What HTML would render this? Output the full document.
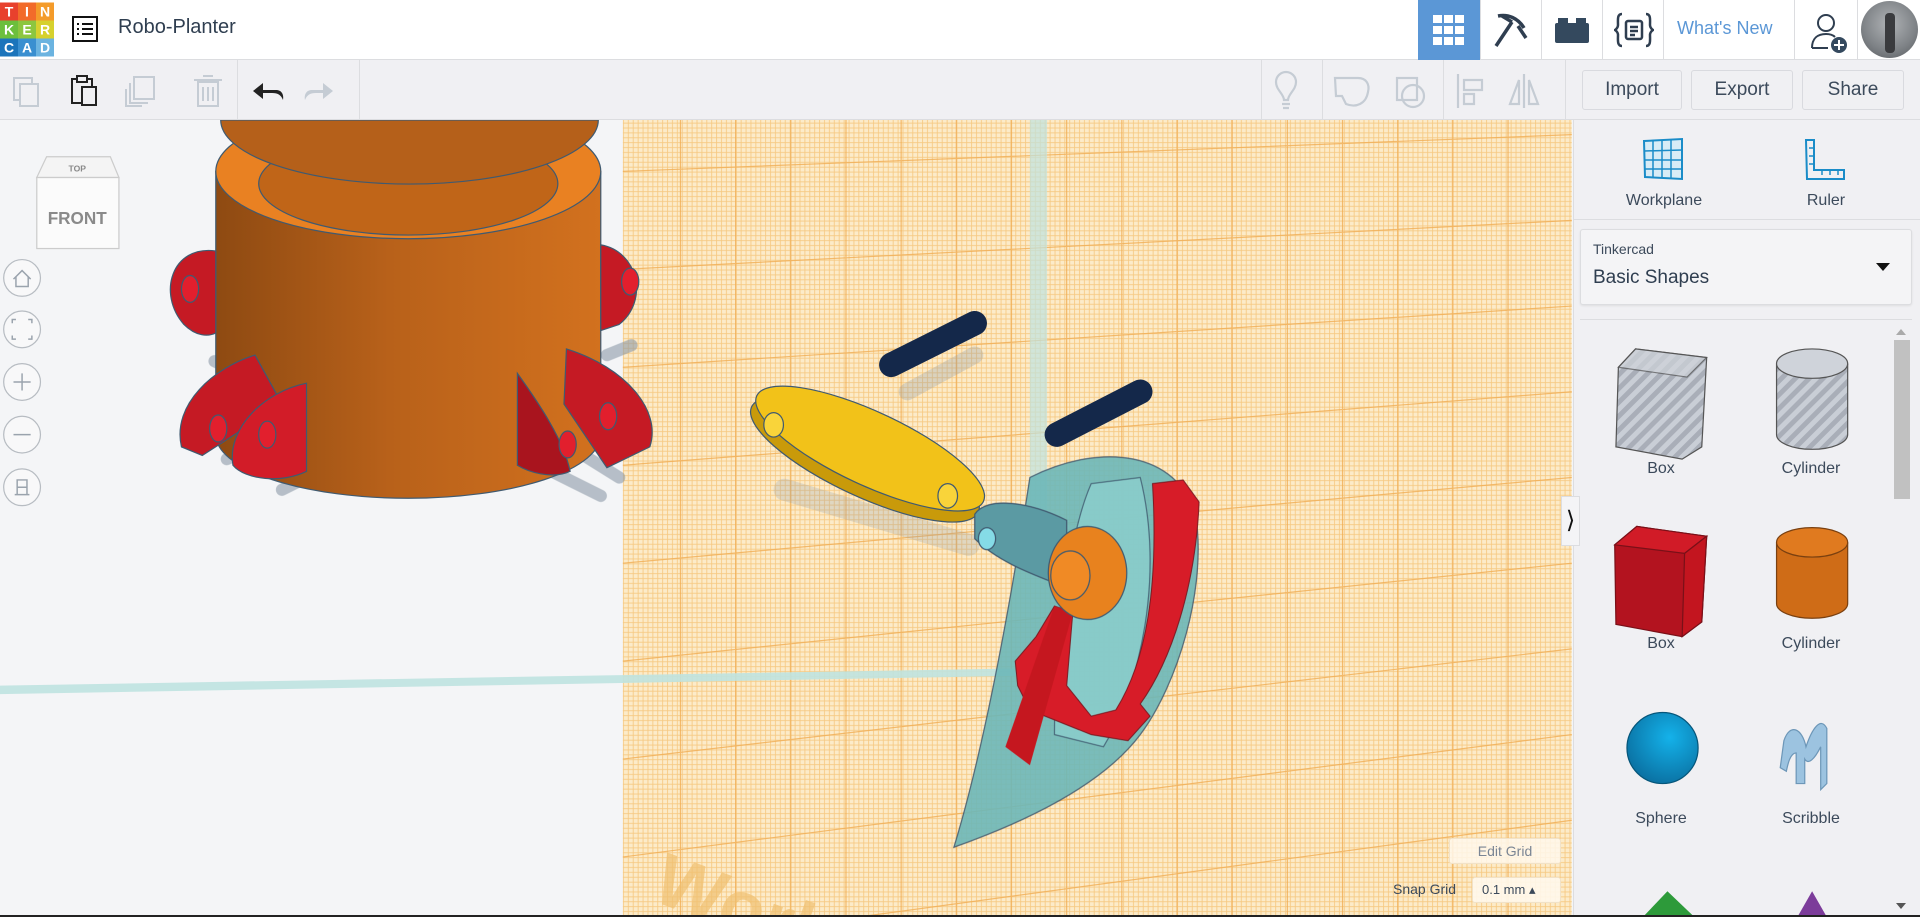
<!DOCTYPE html>
<html><head><meta charset="utf-8">
<style>
*{margin:0;padding:0;box-sizing:border-box}
html,body{width:1920px;height:917px;overflow:hidden}
body{background:#f4f5f7;font-family:"Liberation Sans",sans-serif;position:relative;color:#2f3e50}
.abs{position:absolute}
#hdr{left:0;top:0;width:1920px;height:60px;background:#fff;border-bottom:1px solid #dcdde0}
#tb{left:0;top:60px;width:1920px;height:60px;background:#f0f0f3;border-bottom:1px solid #dcdde0}
#panel{left:1573px;top:120px;width:347px;height:797px;background:#f0f0f3;border-left:1px solid #dcdde0}
.btn{position:absolute;top:70px;height:40px;border:1px solid #d9dadf;border-radius:3px;background:#f0f0f3;font-size:19px;color:#3c4a5b;text-align:center;line-height:38px}
.lbl{position:absolute;font-size:16px;color:#3c4a5b;text-align:center;width:150px}
.sep{position:absolute;width:1px;background:#dcdde0}
</style></head><body>

<svg class="abs" style="left:0;top:0" width="1920" height="917" viewBox="0 0 1566 749" preserveAspectRatio="none">
<defs>
<pattern id="fine" width="4" height="4" patternUnits="userSpaceOnUse">
<rect width="4" height="4" fill="#fcebc9"/>
<path d="M0 .5H4M.5 0V4" stroke="#f6c982" stroke-width=".7"/>
</pattern>
<linearGradient id="cyl" x1="0" x2="1">
<stop offset="0" stop-color="#8e4a12"/><stop offset=".45" stop-color="#b8611a"/><stop offset="1" stop-color="#d2711e"/>
</linearGradient>
</defs>
<polygon points="508,98 1282,98 1282,749 508,749" fill="url(#fine)"/>
<g stroke="#f1ae55" stroke-width="1" opacity=".8">
<path d="M555 98V749M600 98V749M645 98V749M690 98V749M735 98V749M780 98V749M825 98V749M870 98V749M915 98V749M960 98V749M1005 98V749M1050 98V749M1095 98V749M1140 98V749M1185 98V749M1230 98V749"/>
<path d="M508 140L1282 110M508 220L1282 180M508 300L1282 250M508 380L1282 320M508 460L1282 390M508 540L1282 460M508 620L1282 530M508 700L1282 600M700 749L1282 670"/>
</g>
<text x="530" y="735" font-size="60" font-weight="bold" fill="#f0c070" opacity=".7" transform="rotate(20 530 735)" font-family="Liberation Sans">Work</text>
<rect x="840" y="98" width="14" height="330" fill="#bfe3e0" opacity=".7"/>
<polygon points="0,560 830,546 830,552 0,567" fill="#bfe3e0" opacity=".9"/>
<g stroke="#8d9aa8" stroke-width="10" stroke-linecap="round" opacity=".6">
<path d="M175 295L215 315M185 375L240 350M230 400L280 375M465 365L505 390M440 380L490 405M495 290L515 282"/>
<path d="M740 320L795 290" stroke-width="14" opacity=".5"/>
<path d="M640 400L790 445" stroke-width="18" opacity=".4"/>
</g>
<path d="M176 140V355A157 52 0 0 0 490 355V140Z" fill="url(#cyl)" stroke="#405a70" stroke-width="1"/>
<ellipse cx="333" cy="140" rx="157" ry="55" fill="#e98122" stroke="#405a70"/>
<ellipse cx="333" cy="150" rx="122" ry="42" fill="#c06518" stroke="#405a70"/>
<path d="M180 98A153 52 0 0 0 488 98Z" fill="#b5601a" stroke="#405a70"/>
<g fill="#c51a24" stroke="#405a70" stroke-width="1">
<path d="M176 205C140 200 128 240 150 265C160 275 170 275 176 272Z"/>
<path d="M490 200C520 205 530 245 505 265L490 270Z"/>
<path d="M208 290C175 300 140 330 148 365L165 372L230 330Z"/>
<path d="M250 313C215 320 185 350 190 380C200 392 230 395 250 385Z" fill="#d21c28"/>
<path d="M422 305C440 330 460 360 465 385C450 392 430 385 422 380Z" fill="#a9141e"/>
<path d="M462 285C510 300 540 335 530 365L495 382L460 330Z"/>
</g>
<g fill="#e21f2d" stroke="#405a70">
<ellipse cx="155" cy="236" rx="7" ry="11"/><ellipse cx="514" cy="230" rx="7" ry="11"/>
<ellipse cx="178" cy="350" rx="7" ry="11"/><ellipse cx="218" cy="355" rx="7" ry="11"/>
<ellipse cx="463" cy="363" rx="7" ry="11"/><ellipse cx="496" cy="340" rx="7" ry="11"/>
</g>
<g>
<polygon points="38,128 90,128 97,145 30,145" fill="#f4f4f4" stroke="#ccc"/>
<rect x="30" y="145" width="67" height="58" fill="#fbfbfb" stroke="#ccc"/>
<text x="63" y="140" font-size="7" fill="#888" text-anchor="middle" font-weight="bold">TOP</text>
<text x="63" y="183" font-size="14" fill="#8a8a8a" text-anchor="middle" font-weight="bold">FRONT</text>
</g>
<g fill="#f8f8f9" stroke="#b7bcc2" stroke-width="1">
<circle cx="18" cy="227" r="15"/><circle cx="18" cy="269" r="15"/><circle cx="18" cy="312" r="15"/><circle cx="18" cy="355" r="15"/><circle cx="18" cy="398" r="15"/>
</g>
<g stroke="#9aa3ad" stroke-width="1.2" fill="none">
<path d="M11 228L18 221L25 228M13 226V234H23V226"/>
<path d="M10 264V261H13M23 261H26V264M26 274V277H23M13 277H10V274"/>
<path d="M11 312H25M18 305V319"/><path d="M11 355H25"/>
<path d="M12 404H24M14 404V392H22V404M14 398H22"/>
</g>
<g stroke-linecap="round">
<path d="M727 298L795 264" stroke="#14284a" stroke-width="20"/>
<path d="M862 355L930 320" stroke="#14284a" stroke-width="20"/>
</g>
<g transform="rotate(25 708 370)">
<ellipse cx="708" cy="376" rx="102" ry="30" fill="#c99a0a" stroke="#405a70"/>
<ellipse cx="708" cy="366" rx="102" ry="30" fill="#f2c219" stroke="#405a70"/>
</g>
<ellipse cx="631" cy="347" rx="8" ry="10" fill="#f9d43a" stroke="#405a70"/>
<ellipse cx="773" cy="405" rx="8" ry="10" fill="#f9d43a" stroke="#405a70"/>
<path d="M840 390C900 360 960 370 975 420C985 480 960 560 930 600C900 640 840 670 778 692C800 620 820 520 840 390Z" fill="#6cb7b8" stroke="#405a70" opacity=".9"/>
<path d="M890 395C870 440 860 540 860 600L900 610C930 560 950 470 930 390Z" fill="#8ccfcd" stroke="#405a70" opacity=".8"/>
<path d="M795 420C805 405 840 410 870 425V480C845 470 815 460 795 440Z" fill="#5b9aa3" stroke="#405a70"/>
<ellipse cx="805" cy="440" rx="7" ry="9" fill="#85dbe6" stroke="#405a70"/>
<path d="M940 395L965 392L978 410C975 480 955 540 930 575L938 585L920 605L890 600L840 580L830 560L828 540L845 520L860 495L875 500L870 560L890 585L910 580C935 540 945 480 940 395Z" fill="#d71c28" stroke="#7a1a22" stroke-width=".8"/>
<path d="M860 495L820 610L840 625L875 500Z" fill="#c5171f"/>
<ellipse cx="887" cy="468" rx="32" ry="38" fill="#e8821e" stroke="#405a70"/>
<ellipse cx="873" cy="470" rx="16" ry="20" fill="#f08a25" stroke="#405a70"/>
</svg>

<div id="hdr" class="abs"></div>
<svg class="abs" style="left:0;top:2px" width="54" height="55" viewBox="0 0 54 54">
<rect x="0" y="0" width="18" height="18" fill="#e8412d"/><rect x="18" y="0" width="18" height="18" fill="#f26b2a"/><rect x="36" y="0" width="18" height="18" fill="#f49b2a"/>
<rect x="0" y="18" width="18" height="18" fill="#6cbf3c"/><rect x="18" y="18" width="18" height="18" fill="#8cc63f"/><rect x="36" y="18" width="18" height="18" fill="#d6d12e"/>
<rect x="0" y="36" width="18" height="18" fill="#1b74bb"/><rect x="18" y="36" width="18" height="18" fill="#3a8fd0"/><rect x="36" y="36" width="18" height="18" fill="#6bb3e0"/>
<g fill="#fff" font-family="Liberation Sans" font-weight="bold" font-size="14" text-anchor="middle">
<text x="9" y="14">T</text><text x="27" y="14">I</text><text x="45" y="14">N</text>
<text x="9" y="32">K</text><text x="27" y="32">E</text><text x="45" y="32">R</text>
<text x="9" y="50">C</text><text x="27" y="50">A</text><text x="45" y="50">D</text></g>
</svg>
<svg class="abs" style="left:71px;top:15px" width="28" height="28" viewBox="0 0 28 28" fill="none" stroke="#111" stroke-width="2">
<rect x="2" y="2" width="24" height="24"/><path d="M6 9h2M11 9h11M6 14h2M11 14h11M6 19h2M11 19h11"/></svg>
<div class="abs" style="left:118px;top:16px;font-size:20px;color:#2f3e50">Robo-Planter</div>

<div class="abs" style="left:1418px;top:0;width:62px;height:60px;background:#5b97d6"></div>
<svg class="abs" style="left:1432px;top:14px" width="34" height="32" viewBox="0 0 34 32" fill="#fff">
<rect x="1" y="1" width="9" height="8"/><rect x="12" y="1" width="9" height="8"/><rect x="23" y="1" width="9" height="8"/>
<rect x="1" y="12" width="9" height="8"/><rect x="12" y="12" width="9" height="8"/><rect x="23" y="12" width="9" height="8"/>
<rect x="1" y="23" width="9" height="8"/><rect x="12" y="23" width="9" height="8"/><rect x="23" y="23" width="9" height="8"/></svg>
<svg class="abs" style="left:1492px;top:12px" width="38" height="38" viewBox="0 0 38 38" fill="none" stroke="#2f3e50" stroke-width="3.5">
<path d="M6 4C16 2 26 6 32 16M20 10L4 34"/><path d="M20 10L10 4M26 14L34 26"/></svg>
<svg class="abs" style="left:1555px;top:17px" width="34" height="26" viewBox="0 0 34 26" fill="#34495e">
<rect x="0" y="6" width="34" height="20" rx="2"/><rect x="3" y="1" width="10" height="7"/><rect x="21" y="1" width="10" height="7"/></svg>
<svg class="abs" style="left:1614px;top:12px" width="40" height="36" viewBox="0 0 40 36" fill="none" stroke="#2f3e50" stroke-width="2.5">
<path d="M8 2C3 2 4 8 4 13C4 16 1 18 1 18C1 18 4 20 4 23C4 28 3 34 8 34M32 2C37 2 36 8 36 13C36 16 39 18 39 18C39 18 36 20 36 23C36 28 37 34 32 34"/>
<rect x="12" y="9" width="16" height="18" rx="2"/><path d="M16 15h8M16 19h8M16 23h5"/></svg>
<div class="sep" style="left:1480px;top:0;height:60px"></div><div class="sep" style="left:1541px;top:0;height:60px"></div><div class="sep" style="left:1602px;top:0;height:60px"></div><div class="sep" style="left:1663px;top:0;height:60px"></div>
<div class="abs" style="left:1677px;top:18px;font-size:18px;color:#5b97d6">What's New</div>
<div class="sep" style="left:1794px;top:0;height:60px"></div><div class="sep" style="left:1857px;top:0;height:60px"></div>
<svg class="abs" style="left:1810px;top:12px" width="40" height="42" viewBox="0 0 40 42" fill="none" stroke="#2f3e50" stroke-width="2">
<circle cx="16" cy="11" r="8"/><path d="M2 36C2 26 8 22 16 22C20 22 23 23 25 25M2 36H18"/>
<circle cx="29" cy="33" r="8" fill="#34495e" stroke="none"/><path d="M29 28V38M24 33H34" stroke="#fff"/></svg>
<div class="abs" style="left:1861px;top:1px;width:57px;height:57px;border-radius:50%;background:radial-gradient(circle at 50% 40%,#b0b3b6,#7e8286 60%,#55585c);overflow:hidden">
<div style="position:absolute;left:24px;top:12px;width:10px;height:40px;background:#3a3b3e;border-radius:4px"></div></div>

<div id="tb" class="abs"></div>
<svg class="abs" style="left:10px;top:73px" width="340" height="34" viewBox="0 0 340 34" fill="none" stroke-width="2">
<g stroke="#c5ccd4"><rect x="4" y="5" width="18" height="22"/><rect x="10" y="11" width="18" height="22" fill="#f0f0f3"/></g>
<g stroke="#222"><rect x="62" y="6" width="20" height="24"/><rect x="67" y="3" width="10" height="6" fill="#f0f0f3"/><rect x="72" y="14" width="14" height="18" fill="#f0f0f3"/></g>
<g stroke="#c5ccd4"><rect x="124" y="4" width="20" height="22"/><path d="M120 10V30H138"/><path d="M116 16V33H132"/></g>
<g stroke="#c5ccd4"><rect x="188" y="9" width="20" height="24"/><path d="M184 7H212M193 3H203M193 14V28M198 14V28M203 14V28"/></g>
<path d="M248 17H266C272 17 274 22 273 27C271 22 268 20 262 20H248Z" fill="#222" stroke="none"/><path d="M243 18L253 10V26Z" fill="#222"/>
<path d="M318 17H302C296 17 294 22 295 27C297 22 300 20 306 20H318Z" fill="#c5ccd4" stroke="none"/><path d="M323 18L313 10V26Z" fill="#c5ccd4"/>
</svg>
<div class="sep" style="left:237px;top:60px;height:60px"></div><div class="sep" style="left:359px;top:60px;height:60px"></div>
<div class="sep" style="left:1261px;top:60px;height:60px"></div><div class="sep" style="left:1322px;top:60px;height:60px"></div><div class="sep" style="left:1443px;top:60px;height:60px"></div><div class="sep" style="left:1565px;top:60px;height:60px"></div>
<svg class="abs" style="left:1270px;top:70px" width="290" height="42" viewBox="0 0 290 42" fill="none" stroke="#c5ccd4" stroke-width="2.2">
<path d="M14 30C14 24 6 20 6 12A10 10 0 0 1 26 12C26 20 18 24 18 30ZM12 34H20M13 38H19"/>
<path d="M65 8H88C96 8 100 14 98 22C96 34 86 38 76 34L72 26H66Z"/>
<rect x="127" y="8" width="20" height="22"/><circle cx="143" cy="26" r="11"/>
<path d="M188 4V38M194 10H212V20H194ZM194 24H204V34H194Z"/>
<path d="M254 4V38M249 10L240 34H249ZM259 10L268 34H259Z"/>
</svg>
<div class="btn" style="left:1582px;width:100px">Import</div>
<div class="btn" style="left:1691px;width:102px">Export</div>
<div class="btn" style="left:1802px;width:102px">Share</div>

<div id="panel" class="abs"></div>
<svg class="abs" style="left:0;top:0" width="1920" height="917" viewBox="0 0 1566 749" preserveAspectRatio="none">
<defs>
<pattern id="str" width="8" height="8" patternUnits="userSpaceOnUse" patternTransform="rotate(45)">
<rect width="8" height="8" fill="#a9aeb8"/><rect width="4" height="8" fill="#c9ced6"/></pattern>
<radialGradient id="sph" cx=".6" cy=".35" r=".7"><stop offset="0" stop-color="#14b2ea"/><stop offset="1" stop-color="#0a6fa0"/></radialGradient>
</defs>
<g stroke="#555" stroke-width="1">
<polygon points="1320,300 1334,285 1392,292 1388,365 1372,375 1318,365" fill="url(#str)"/>
<polygon points="1320,300 1334,285 1392,292 1376,308" fill="#cfd3da" opacity=".7"/>
<path d="M1449 297V355A29 12 0 0 0 1507 355V297" fill="url(#str)"/>
<ellipse cx="1478" cy="297" rx="29" ry="12" fill="#cfd3da"/>
<polygon points="1317,445 1335,430 1392,438 1388,508 1372,520 1318,510" fill="#b3131f" stroke="#7a1018"/>
<polygon points="1317,445 1335,430 1392,438 1374,452" fill="#d11b27" stroke="#7a1018"/>
<polygon points="1374,452 1392,438 1388,508 1372,520" fill="#c3151f" stroke="#7a1018"/>
<path d="M1449 443V493A29 12 0 0 0 1507 493V443" fill="#cf6c17" stroke="#7a4010"/>
<ellipse cx="1478" cy="443" rx="29" ry="12" fill="#e07a1f" stroke="#7a4010"/>
</g>
<circle cx="1356" cy="611" r="29" fill="url(#sph)" stroke="#06567a"/>
<path d="M1455 605C1460 590 1470 595 1473 610C1478 595 1485 585 1490 595V640L1485 645V610C1480 620 1475 625 1472 620V640L1465 640V615C1460 615 1458 625 1457 630L1452 627Z" fill="#9cc3e0" stroke="#6d97b8"/>
<polygon points="1340,749 1360,728 1382,749" fill="#2d9a3a"/>
<polygon points="1466,749 1478,728 1490,749" fill="#7c3c9a"/>
</svg>
<svg class="abs" style="left:1642px;top:137px" width="42" height="45" viewBox="0 0 42 45" fill="#d8ecf6" stroke="#1a8cc8" stroke-width="2">
<path d="M2 4L40 2V42L3 40Z"/><path d="M2 14L40 13M2 23L40 23M2 32L40 32M11 4V40M20 3V41M29 3V41" stroke-width="1.5"/></svg>
<div class="lbl" style="left:1589px;top:192px">Workplane</div>
<svg class="abs" style="left:1803px;top:138px" width="44" height="44" viewBox="0 0 44 44" fill="none" stroke="#1a8cc8" stroke-width="2">
<path d="M3 2H11V32H41V41H4Z"/><path d="M11 10H6M11 18H6M11 26H6M19 32V37M27 32V37M35 32V37" stroke-width="1.5"/></svg>
<div class="lbl" style="left:1751px;top:192px">Ruler</div>
<div class="abs" style="left:1573px;top:219px;width:347px;height:1px;background:#dcdde0"></div>
<div class="abs" style="left:1580px;top:229px;width:332px;height:76px;background:#f4f4f6;border:1px solid #dcdde0;border-radius:3px;box-shadow:0 1px 2px rgba(0,0,0,.08)"></div>
<div class="abs" style="left:1593px;top:241px;font-size:14px;color:#3c4a5b">Tinkercad</div>
<div class="abs" style="left:1593px;top:267px;font-size:19px;color:#2f3e50">Basic Shapes</div>
<div class="abs" style="left:1876px;top:263px;width:0;height:0;border-left:7px solid transparent;border-right:7px solid transparent;border-top:8px solid #111"></div>
<div class="abs" style="left:1580px;top:319px;width:332px;height:1px;background:#dcdde0"></div>
<div class="abs" style="left:1896px;top:329px;width:0;height:0;border-left:5px solid transparent;border-right:5px solid transparent;border-bottom:6px solid #aaa"></div>
<div class="abs" style="left:1894px;top:340px;width:16px;height:159px;background:#c1c1c1"></div>
<div class="abs" style="left:1896px;top:903px;width:0;height:0;border-left:5px solid transparent;border-right:5px solid transparent;border-top:6px solid #555"></div>
<div class="lbl" style="left:1586px;top:460px">Box</div>
<div class="lbl" style="left:1736px;top:460px">Cylinder</div>
<div class="lbl" style="left:1586px;top:635px">Box</div>
<div class="lbl" style="left:1736px;top:635px">Cylinder</div>
<div class="lbl" style="left:1586px;top:810px">Sphere</div>
<div class="lbl" style="left:1736px;top:810px">Scribble</div>
<div class="abs" style="left:1561px;top:496px;width:19px;height:50px;background:#f4f4f6;border:1px solid #dcdde0;font-size:24px;text-align:center;line-height:48px;color:#111">&#10217;</div>

<div class="abs" style="left:1449px;top:838px;width:112px;height:26px;background:rgba(255,248,236,.85);border:1px solid #f1e2c8;border-radius:3px;font-size:14px;color:#7a8594;text-align:center;line-height:24px">Edit Grid</div>
<div class="abs" style="left:1393px;top:881px;font-size:14px;color:#3c4a5b">Snap Grid</div>
<div class="abs" style="left:1472px;top:877px;width:89px;height:26px;background:rgba(255,248,236,.9);border:1px solid #f1e2c8;border-radius:3px;font-size:13px;color:#3c4a5b;line-height:24px;padding-left:9px">0.1 mm &#9652;</div>
<div class="abs" style="left:0;top:915px;width:1920px;height:2px;background:#222"></div>
</body></html>
